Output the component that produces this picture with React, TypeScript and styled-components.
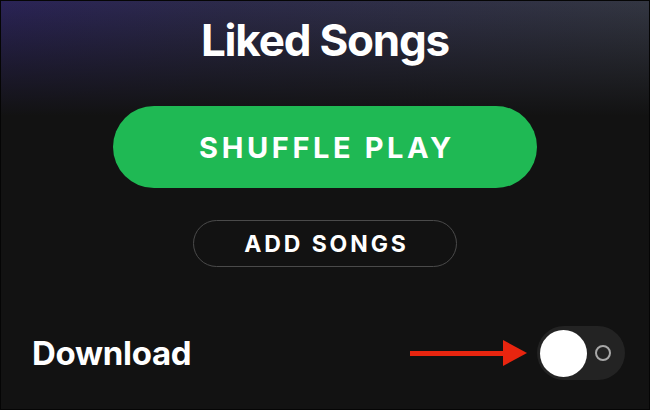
import React from "react";
import styled, { createGlobalStyle } from "styled-components";

const Global = createGlobalStyle`
  html, body { margin: 0; padding: 0; background: #121212; }
  * { box-sizing: border-box; }
`;

const Page = styled.div`
  width: 650px;
  height: 410px;
  border: 1px solid #050505;
  background:
    linear-gradient(180deg, rgba(18,18,18,0) 0%, #121212 115px),
    linear-gradient(90deg, #2a2356 0%, #2c2a4a 35%, #333642 100%);
  font-family: Inter, "Noto Sans", sans-serif;
  color: #fff;
  display: flex;
  flex-direction: column;
  align-items: center;
`;

const Title = styled.h1`
  margin: 12px 0 0;
  font-size: 44px;
  line-height: 54px;
  font-weight: 700;
  letter-spacing: -1.2px;
`;

const ShuffleButton = styled.button`
  margin-top: 39px;
  width: 424px;
  height: 82px;
  border: none;
  border-radius: 41px;
  background: #1fb954;
  color: #fff;
  font-family: inherit;
  font-size: 29px;
  font-weight: 700;
  letter-spacing: 3.6px;
  display: flex;
  align-items: center;
  justify-content: center;
  padding: 0 0 0 4px;
`;

const AddButton = styled.button`
  margin-top: 32px;
  width: 264px;
  height: 47px;
  border: 1.5px solid #4a4a4a;
  border-radius: 24px;
  background: transparent;
  color: #fff;
  font-family: inherit;
  font-size: 23px;
  font-weight: 700;
  letter-spacing: 2.9px;
  display: flex;
  align-items: center;
  justify-content: center;
  padding: 0 0 0 3px;
`;

const Row = styled.div`
  margin-top: 59px;
  width: 100%;
  display: flex;
  align-items: center;
  justify-content: space-between;
  padding: 0 24px 0 31px;
`;

const Label = styled.span`
  font-size: 33px;
  font-weight: 700;
  letter-spacing: -0.3px;
`;

const Right = styled.div`
  display: flex;
  align-items: center;
  gap: 10px;
`;

const Track = styled.div`
  width: 88px;
  height: 54px;
  border-radius: 27px;
  background: #232323;
  display: flex;
  align-items: center;
  padding: 0 0 0 3px;
`;

const Knob = styled.div`
  width: 47px;
  height: 47px;
  border-radius: 50%;
  background: #fff;
`;

const OffMark = styled.div`
  margin-left: 8px;
  width: 16px;
  height: 16px;
  border-radius: 50%;
  border: 2px solid #a8a8a8;
`;

const Arrow = () => (
  <svg width="117" height="26" viewBox="0 0 117 26">
    <rect x="0" y="11" width="96" height="5" fill="#e8250f" />
    <polygon points="93,0 117,13 93,26" fill="#e8250f" />
  </svg>
);

export default function App() {
  return (
    <>
      <Global />
      <Page>
        <Title>Liked Songs</Title>
        <ShuffleButton>SHUFFLE PLAY</ShuffleButton>
        <AddButton>ADD SONGS</AddButton>
        <Row>
          <Label>Download</Label>
          <Right>
            <Arrow />
            <Track>
              <Knob />
              <OffMark />
            </Track>
          </Right>
        </Row>
      </Page>
    </>
  );
}
